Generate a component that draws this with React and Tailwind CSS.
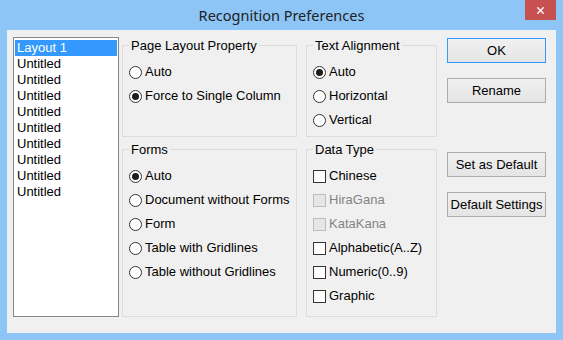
import { X } from 'lucide-react';

const font = { fontFamily: '"Liberation Sans", Arial, sans-serif' };

const layouts = ['Layout 1', 'Untitled', 'Untitled', 'Untitled', 'Untitled', 'Untitled', 'Untitled', 'Untitled', 'Untitled', 'Untitled'];

const Radio = ({ checked, label }) => (
  <div className="flex h-[24px] items-center">
    <span className="flex h-[13px] w-[13px] items-center justify-center rounded-full border border-[#333333] bg-white">
      {checked && <span className="h-[7px] w-[7px] rounded-full bg-[#1c1c1c]" />}
    </span>
    <span className="ml-[3px]">{label}</span>
  </div>
);

const Check = ({ label, disabled }) => (
  <div className="flex h-[24px] items-center">
    <span
      className={
        disabled
          ? 'h-[13px] w-[13px] border border-[#bcbcbc] bg-[#e6e6e6]'
          : 'h-[13px] w-[13px] border border-[#333333] bg-white'
      }
    />
    <span className={disabled ? 'ml-[3px] text-[#838383]' : 'ml-[3px]'}>{label}</span>
  </div>
);

const Group = ({ title, className, children }) => (
  <fieldset className={`border border-[#dcdcdc] pl-[6px] ${className}`}>
    <legend className="px-[2px] leading-[15px]">{title}</legend>
    <div className="pt-[7px]">{children}</div>
  </fieldset>
);

const Button = ({ children, primary, className = '' }) => (
  <button
    className={`h-[25px] w-full bg-linear-to-b from-[#f0f0f0] to-[#e5e5e5] text-[13px] leading-none text-black ${
      primary ? 'border border-[#3399ff]' : 'border border-[#acacac]'
    } ${className}`}
  >
    {children}
  </button>
);

export default function App() {
  return (
    <div className="flex h-[340px] w-[563px] flex-col bg-[#8cc5f6] text-[13px] text-black" style={font}>
      {/* title bar */}
      <div className="flex h-[30px] items-start px-[7px]">
        <div className="w-[31px]" />
        <div
          className="flex h-[31px] flex-1 items-center justify-center text-[14.5px] text-[#222222]"
          style={{ fontFamily: '"Noto Sans", "Open Sans", sans-serif' }}
        >
          Recognition Preferences
        </div>
        <div className="flex h-[20px] w-[31px] items-center justify-center bg-[#c75050]">
          <X size={11} strokeWidth={3} color="#ffffff" />
        </div>
      </div>

      {/* dialog body */}
      <div className="mx-[7px] mb-[7px] flex flex-1 bg-[#f0f0f0] pl-[6px] pr-[10px]">
        <div className="mt-[7px] h-[280px] w-[106px] border border-[#828790] bg-white px-[1px] pt-[2px]">
          {layouts.map((name, i) => (
            <div
              key={i}
              className={i === 0 ? 'h-[16px] bg-[#3399ff] pl-[2px] leading-[16px] text-white' : 'h-[16px] pl-[2px] leading-[16px]'}
            >
              {name}
            </div>
          ))}
        </div>

        <div className="ml-[3px] mt-[8px] flex w-[175px] flex-col gap-[5px]">
          <Group title="Page Layout Property" className="h-[99px]">
            <Radio label="Auto" />
            <Radio checked label="Force to Single Column" />
          </Group>
          <Group title="Forms" className="h-[175px]">
            <Radio checked label="Auto" />
            <Radio label="Document without Forms" />
            <Radio label="Form" />
            <Radio label="Table with Gridlines" />
            <Radio label="Table without Gridlines" />
          </Group>
        </div>

        <div className="ml-[9px] mt-[8px] flex w-[131px] flex-col gap-[5px]">
          <Group title="Text Alignment" className="h-[99px]">
            <Radio checked label="Auto" />
            <Radio label="Horizontal" />
            <Radio label="Vertical" />
          </Group>
          <Group title="Data Type" className="h-[175px]">
            <Check label="Chinese" />
            <Check disabled label="HiraGana" />
            <Check disabled label="KataKana" />
            <Check label="Alphabetic(A..Z)" />
            <Check label="Numeric(0..9)" />
            <Check label="Graphic" />
          </Group>
        </div>

        <div className="ml-[10px] mt-[8px] flex w-[99px] flex-col">
          <Button primary>OK</Button>
          <Button className="mt-[15px]">Rename</Button>
          <Button className="mt-[49px]">Set as Default</Button>
          <Button className="mt-[15px]">Default Settings</Button>
        </div>
      </div>
    </div>
  );
}
